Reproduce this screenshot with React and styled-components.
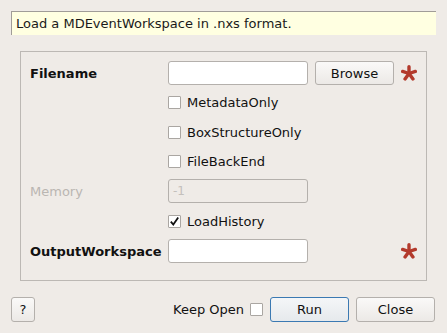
import React from 'react'
import styled, { createGlobalStyle } from 'styled-components'

const Global = createGlobalStyle`
  html, body {
    margin: 0;
    padding: 0;
    background: #efebe7;
  }
  body {
    font-family: "DejaVu Sans", sans-serif;
    font-size: 13px;
    color: #1a1a1a;
  }
`

const Dialog = styled.div`
  width: 447px;
  height: 333px;
  box-sizing: border-box;
  padding-top: 11px;
  display: flex;
  flex-direction: column;
`

const Description = styled.div`
  margin: 0 11px;
  height: 24px;
  box-sizing: border-box;
  background: #ffffe1;
  border-top: 1px solid #a09c98;
  border-left: 1px solid #a09c98;
  display: flex;
  align-items: center;
  padding-left: 4px;
`

const Group = styled.div`
  margin: 16px 20px 0 20px;
  height: 230px;
  box-sizing: border-box;
  border: 1px solid #bcb8b4;
  padding: 9px 0 0 9px;
  display: grid;
  grid-template-columns: 138px 140px 86px 24px;
  grid-template-rows: 24px 23px 24px 23px 24px 24px 24px;
  row-gap: 6px;
  align-items: center;
`

const Label = styled.div`
  grid-column: 1;
  font-weight: ${p => (p.$bold ? 'bold' : 'normal')};
  color: ${p => (p.$disabled ? '#bab6b2' : '#111')};
  white-space: nowrap;
`

const Input = styled.div`
  grid-column: 2;
  height: 24px;
  box-sizing: border-box;
  border: 1px solid #b4b0ac;
  border-radius: 3px;
  background: ${p => (p.$disabled ? '#efebe7' : '#fff')};
  color: #c4c0bc;
  display: flex;
  align-items: center;
  padding-left: 4px;
  font-size: 12px;
`

const Button = styled.div`
  height: 25px;
  width: ${p => p.$w || 79}px;
  box-sizing: border-box;
  border: 1px solid ${p => (p.$default ? '#3b79b2' : '#b4b0ac')};
  border-radius: 3px;
  background: ${p =>
    p.$default
      ? 'linear-gradient(#f4f6f8, #e6e9ec)'
      : 'linear-gradient(#faf9f8, #ece9e6)'};
  display: flex;
  align-items: center;
  justify-content: center;
  color: #111;
`

const BrowseButton = styled(Button)`
  grid-column: 3;
  height: 24px;
  margin-left: 7px;
`

const Required = styled.div`
  grid-column: 4;
  display: flex;
  align-items: center;
  padding-left: 7px;
`

const CheckRow = styled.label`
  grid-column: 2 / span 3;
  display: flex;
  align-items: center;
  gap: 6px;
  color: #111;
`

const Box = styled.span`
  width: 13px;
  height: 13px;
  box-sizing: border-box;
  border: 1px solid #aaa6a2;
  border-radius: 1px;
  background: #fff;
  display: inline-flex;
  align-items: center;
  justify-content: center;
`

const Footer = styled.div`
  margin-top: 16px;
  padding: 0 12px 0 11px;
  display: flex;
  align-items: center;
`

const Spacer = styled.div`
  flex: 1;
`

const KeepOpen = styled.label`
  display: flex;
  align-items: center;
  gap: 6px;
  margin-right: 7px;
  color: #111;
`

const Buttons = styled.div`
  display: flex;
  gap: 7px;
`

function Star() {
  const arms = [0, 72, 144, 216, 288]
  return (
    <svg width="16" height="16" viewBox="0 0 16 16">
      {arms.map(a => (
        <line
          key={a}
          x1="8"
          y1="8.5"
          x2="8"
          y2="1.8"
          stroke="#b33a2c"
          strokeWidth="3.4"
          strokeLinecap="round"
          transform={`rotate(${a} 8 8.5)`}
        />
      ))}
    </svg>
  )
}

function Checkbox({ checked }) {
  return (
    <Box>
      {checked && (
        <svg width="11" height="11" viewBox="0 0 11 11">
          <path d="M1.8 5.6 L4.3 8.6 L9.2 1.6" fill="none" stroke="#111" strokeWidth="1.8" />
        </svg>
      )}
    </Box>
  )
}

export default function App() {
  return (
    <Dialog>
      <Global />
      <Description>Load a MDEventWorkspace in .nxs format.</Description>
      <Group>
        <Label $bold>Filename</Label>
        <Input />
        <BrowseButton>Browse</BrowseButton>
        <Required><Star /></Required>

        <CheckRow><Checkbox />MetadataOnly</CheckRow>
        <CheckRow><Checkbox />BoxStructureOnly</CheckRow>
        <CheckRow><Checkbox />FileBackEnd</CheckRow>

        <Label $disabled>Memory</Label>
        <Input $disabled>-1</Input>
        <div />
        <div />

        <CheckRow><Checkbox checked />LoadHistory</CheckRow>

        <Label $bold>OutputWorkspace</Label>
        <Input />
        <div />
        <Required><Star /></Required>
      </Group>
      <Footer>
        <Button $w={24}>?</Button>
        <Spacer />
        <KeepOpen>Keep Open<Checkbox /></KeepOpen>
        <Buttons>
          <Button $default>Run</Button>
          <Button>Close</Button>
        </Buttons>
      </Footer>
    </Dialog>
  )
}
